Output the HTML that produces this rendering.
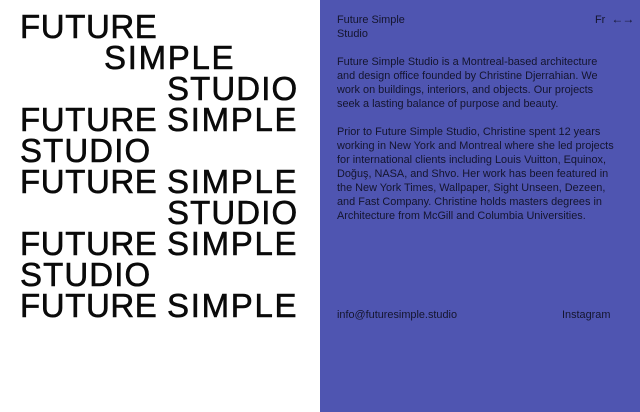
<!DOCTYPE html>
<html><head><meta charset="utf-8"><style>
body{margin:0;width:640px;height:412px;overflow:hidden;background:#fff;font-family:"Liberation Sans",sans-serif;position:relative}
.big{position:absolute;font-size:33px;line-height:31px;color:#0a0a0a;white-space:nowrap;letter-spacing:0.6px;-webkit-text-stroke:0.6px #0a0a0a}
.s{letter-spacing:1.7px}
.t{letter-spacing:1.1px}
.right{position:absolute;left:320px;top:0;width:320px;height:412px;background:#4f55b1;color:#14152e;font-size:10.9px;line-height:14px}
.right div{position:absolute;white-space:nowrap}
</style></head><body>
<div class="big" style="left:20px;top:11px">FUTURE</div>
<div class="big s" style="left:104px;top:42px">SIMPLE</div>
<div class="big t" style="left:167px;top:73px">STUDIO</div>
<div class="big" style="left:20px;top:104px">FUTURE</div>
<div class="big s" style="left:167px;top:104px">SIMPLE</div>
<div class="big t" style="left:20px;top:135px">STUDIO</div>
<div class="big" style="left:20px;top:166px">FUTURE</div>
<div class="big s" style="left:167px;top:166px">SIMPLE</div>
<div class="big t" style="left:167px;top:197px">STUDIO</div>
<div class="big" style="left:20px;top:228px">FUTURE</div>
<div class="big s" style="left:167px;top:228px">SIMPLE</div>
<div class="big t" style="left:20px;top:259px">STUDIO</div>
<div class="big" style="left:20px;top:290px">FUTURE</div>
<div class="big s" style="left:167px;top:290px">SIMPLE</div>
<div class="right">
<div style="left:17px;top:13px">Future Simple<br>Studio</div>
<div style="left:275px;top:12px">Fr&nbsp;&nbsp;<span style="font-size:12px;letter-spacing:-1px">←→</span></div>
<div style="left:17px;top:55px">Future Simple Studio is a Montreal-based architecture<br>and design office founded by Christine Djerrahian. We<br>work on buildings, interiors, and objects. Our projects<br>seek a lasting balance of purpose and beauty.</div>
<div style="left:17px;top:125px">Prior to Future Simple Studio, Christine spent 12 years<br>working in New York and Montreal where she led projects<br>for international clients including Louis Vuitton, Equinox,<br>Doğuş, NASA, and Shvo. Her work has been featured in<br>the New York Times, Wallpaper, Sight Unseen, Dezeen,<br>and Fast Company. Christine holds masters degrees in<br>Architecture from McGill and Columbia Universities.</div>
<div style="left:17px;top:308px">info@futuresimple.studio</div>
<div style="left:242px;top:308px">Instagram</div>
</div>
</body></html>
